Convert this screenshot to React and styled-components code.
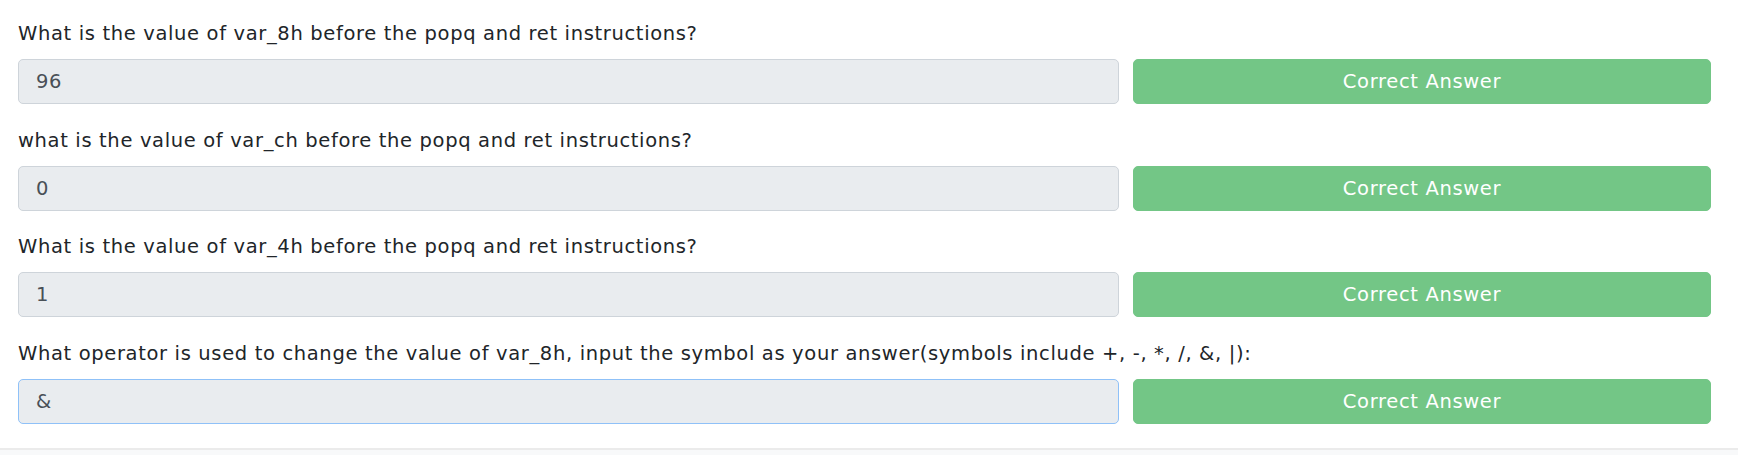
import styled, { createGlobalStyle } from "styled-components";

const GlobalStyle = createGlobalStyle`
  html, body {
    margin: 0;
    padding: 0;
    background: #fff;
  }
  body {
    font-family: "DejaVu Sans", "Open Sans", sans-serif;
    color: #212529;
  }
`;

const questions = [
  { text: "What is the value of var_8h before the popq and ret instructions?", answer: "96" },
  { text: "what is the value of var_ch before the popq and ret instructions?", answer: "0" },
  { text: "What is the value of var_4h before the popq and ret instructions?", answer: "1" },
  {
    text: "What operator is used to change the value of var_8h, input the symbol as your answer(symbols include +, -, *, /, &, |):",
    answer: "&",
    focused: true,
  },
];

const App = () => {
  return (
    <>
      <GlobalStyle />
      <Page>
        <QuestionList>
          {questions.map((q, i) => (
            <Question key={i}>
              <Label>{q.text}</Label>
              <AnswerRow>
                <AnswerInput value={q.answer} $focused={q.focused} disabled readOnly />
                <StatusButton disabled>Correct Answer</StatusButton>
              </AnswerRow>
            </Question>
          ))}
        </QuestionList>
        <Footer />
      </Page>
    </>
  );
};

export default App;

const Page = styled.div`
  display: flex;
  flex-direction: column;
  min-height: 455px;
`;

const QuestionList = styled.div`
  display: flex;
  flex-direction: column;
  gap: 22.7px;
  padding: 20px 27px 24px 18px;
`;

const Question = styled.div`
  display: flex;
  flex-direction: column;
`;

const Label = styled.label`
  font-size: 19.5px;
  letter-spacing: 0.65px;
  line-height: 28px;
  color: #212529;
  margin-bottom: 11px;
  white-space: nowrap;
`;

const AnswerRow = styled.div`
  display: grid;
  grid-template-columns: 1101px 1fr;
  gap: 14px;
`;

const AnswerInput = styled.input`
  box-sizing: border-box;
  height: 45px;
  width: 100%;
  margin: 0;
  padding: 0 17px;
  font-family: "DejaVu Sans", "Open Sans", sans-serif;
  font-size: 19.5px;
  letter-spacing: 0.65px;
  color: #495057;
  -webkit-text-fill-color: #495057;
  opacity: 1;
  background: #e9ecef;
  border: 1px solid ${(p) => (p.$focused ? "#8fc1f8" : "#ced4da")};
  border-radius: 5px;
  outline: none;
`;

const StatusButton = styled.button`
  box-sizing: border-box;
  height: 45px;
  margin: 0;
  padding: 0;
  font-family: "DejaVu Sans", "Open Sans", sans-serif;
  font-size: 19.5px;
  letter-spacing: 0.65px;
  color: #fff;
  background: #73c686;
  border: 1px solid #73c686;
  border-radius: 5px;
  cursor: default;
`;

const Footer = styled.div`
  flex: 1;
  border-top: 2px solid #ebebeb;
  background: #f8f9fa;
`;
